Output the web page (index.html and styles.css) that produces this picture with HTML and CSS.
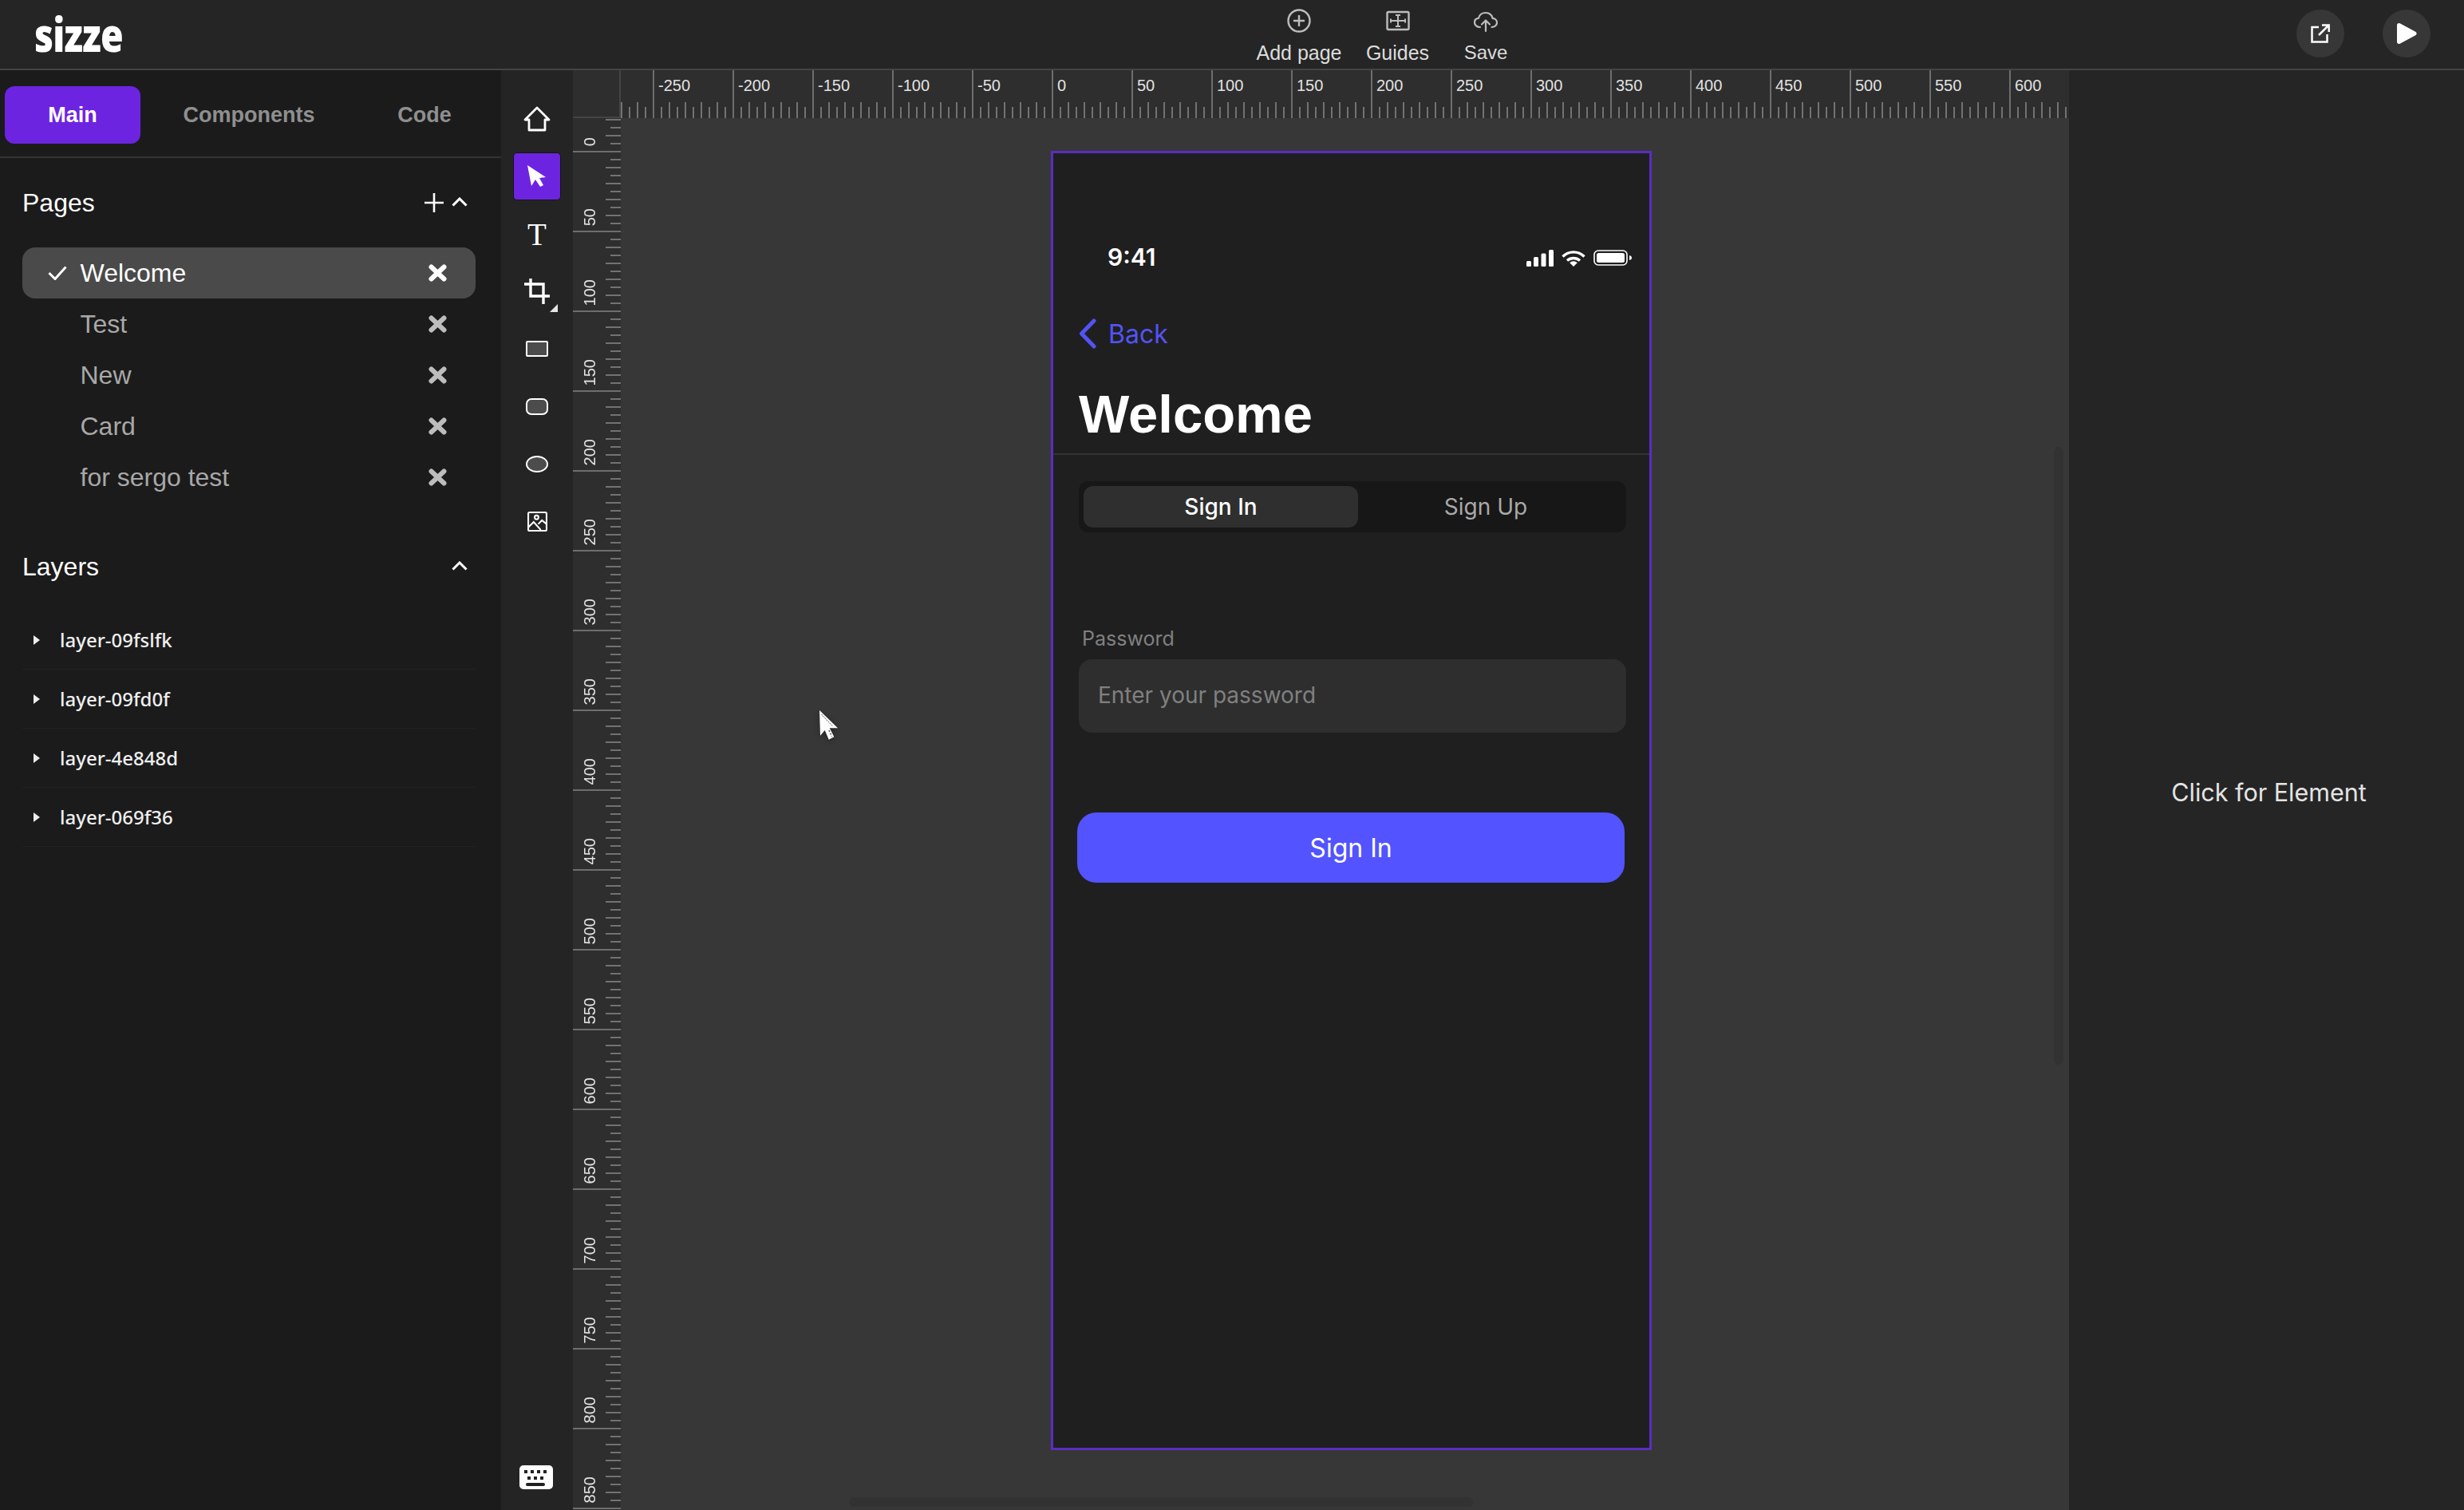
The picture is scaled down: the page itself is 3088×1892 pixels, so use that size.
FILE: index.html
```html
<!DOCTYPE html>
<html lang="en">
<head>
<meta charset="utf-8">
<title>Sizze</title>
<link rel="stylesheet" href="styles.css">
</head>
<body>
<div class="app">
  <header class="topbar">
    <div class="logo-wrap"><span class="logo">sizze</span></div>
    <nav class="actions">
      <button class="action action-add">
        <svg width="30" height="30" viewBox="0 0 30 30" fill="none" stroke="#bdbdbd" stroke-width="2.4"><circle cx="15" cy="15" r="13.5"/><path d="M15 8v14M8 15h14"/></svg>
        <span>Add page</span>
      </button>
      <button class="action action-guides">
        <svg width="30" height="30" viewBox="0 0 30 30" fill="none" stroke="#bdbdbd" stroke-width="2"><rect x="1.5" y="4" width="27" height="22" rx="1.5" stroke-width="2.4"/><path d="M15 8v14M6 15h18M12 8h6M12 22h6M6 12.5v5M24 12.5v5"/></svg>
        <span>Guides</span>
      </button>
      <button class="action action-save">
        <svg width="30" height="30" viewBox="0 0 30 30" fill="none" stroke="#bdbdbd" stroke-width="2.2" stroke-linecap="round" stroke-linejoin="round"><path d="M8 23C3.5 23 1 20 1 17c0-3 2-5 5-5.200C7 7.500 10.500 5 15 5c5 0 8 3.500 8.500 6.800 3 .2 5.500 2.400 5.500 5.400s-2.500 5.800-6.500 5.800"/><path d="M15 28V15M10 19.500l5-5 5 5"/></svg>
        <span>Save</span>
      </button>
    </nav>
    <div class="round-buttons">
      <button class="round-btn">
        <svg width="24" height="24" viewBox="0 0 24 24" fill="none" stroke="#fff" stroke-width="2.500"><path d="M10 4H1.500v18.500h19V13"/><path d="M10 14L22 2M14 1.500h8.700v8.500"/></svg>
      </button>
      <button class="round-btn">
        <svg width="26" height="28" viewBox="0 0 26 28"><path d="M3.500 3.500L23 14 3.500 24.500z" fill="#fff" stroke="#fff" stroke-width="5" stroke-linejoin="round"/></svg>
      </button>
    </div>
  </header>

  <div class="main">
    <aside class="panel">
      <div class="tabs">
        <div class="tab tab-main">Main</div>
        <div class="tab tab-components">Components</div>
        <div class="tab tab-code">Code</div>
      </div>

      <div class="section-head section-pages">
        <span>Pages</span>
        <div class="section-icons">
          <svg width="24" height="24" viewBox="0 0 24 24" stroke="#fff" stroke-width="2.600"><path d="M12 0v24M0 12h24"/></svg>
          <svg class="chev" width="20" height="12" viewBox="0 0 20 12" fill="none" stroke="#fff" stroke-width="3"><path d="M1.500 10.500L10 2l8.500 8.500"/></svg>
        </div>
      </div>

      <ul class="pages">
        <li class="page page-active">
          <svg class="check" width="24" height="18" viewBox="0 0 24 18" fill="none" stroke="#fff" stroke-width="3"><path d="M1.500 9l7.500 7.500L22.500 1.500"/></svg>
          <span class="page-name">Welcome</span>
          <svg class="x" width="23" height="22" viewBox="0 0 23 22" stroke="currentColor" stroke-width="6" stroke-linecap="round"><path d="M3.500 3.500l16 15M19.500 3.500l-16 15"/></svg>
        </li>
        <li class="page">
          <span class="page-name">Test</span>
          <svg class="x" width="23" height="22" viewBox="0 0 23 22" stroke="currentColor" stroke-width="6" stroke-linecap="round"><path d="M3.500 3.500l16 15M19.500 3.500l-16 15"/></svg>
        </li>
        <li class="page">
          <span class="page-name">New</span>
          <svg class="x" width="23" height="22" viewBox="0 0 23 22" stroke="currentColor" stroke-width="6" stroke-linecap="round"><path d="M3.500 3.500l16 15M19.500 3.500l-16 15"/></svg>
        </li>
        <li class="page">
          <span class="page-name">Card</span>
          <svg class="x" width="23" height="22" viewBox="0 0 23 22" stroke="currentColor" stroke-width="6" stroke-linecap="round"><path d="M3.500 3.500l16 15M19.500 3.500l-16 15"/></svg>
        </li>
        <li class="page">
          <span class="page-name">for sergo test</span>
          <svg class="x" width="23" height="22" viewBox="0 0 23 22" stroke="currentColor" stroke-width="6" stroke-linecap="round"><path d="M3.500 3.500l16 15M19.500 3.500l-16 15"/></svg>
        </li>
      </ul>

      <div class="section-head section-layers">
        <span>Layers</span>
        <div class="section-icons">
          <svg class="chev" width="20" height="12" viewBox="0 0 20 12" fill="none" stroke="#fff" stroke-width="3"><path d="M1.500 10.500L10 2l8.500 8.500"/></svg>
        </div>
      </div>

      <ul class="layers">
        <li class="layer"><i class="caret"></i><span>layer-09fslfk</span></li>
        <li class="layer"><i class="caret"></i><span>layer-09fd0f</span></li>
        <li class="layer"><i class="caret"></i><span>layer-4e848d</span></li>
        <li class="layer"><i class="caret"></i><span>layer-069f36</span></li>
      </ul>
    </aside>

    <div class="tools">
      <div class="tool">
        <svg width="34" height="32" viewBox="0 0 34 32" fill="none" stroke="#fff" stroke-width="2.800" stroke-linejoin="round"><path d="M17 2L2 17h5v13h20V17h5z"/></svg>
      </div>
      <div class="tool tool-active">
        <svg width="24" height="28" viewBox="0 0 24 28"><path d="M0 0l23 15-8 1 5 9-4 2-6-9-5 8z" fill="#fff"/></svg>
      </div>
      <div class="tool tool-text">T</div>
      <div class="tool">
        <svg class="crop" width="42" height="42" viewBox="0 0 42 42" fill="none" stroke="#fff" stroke-width="3.400"><path d="M0 7h24v25M8 0v22h24"/><path d="M32 42l10-10v10z" fill="#e6e6e6" stroke="none"/></svg>
      </div>
      <div class="tool">
        <svg width="28" height="20" viewBox="0 0 28 20"><rect x="1" y="1" width="26" height="18" rx="1" fill="#4c4c4c" stroke="#fff" stroke-width="2"/></svg>
      </div>
      <div class="tool">
        <svg width="28" height="21" viewBox="0 0 28 21"><rect x="1" y="1" width="26" height="19" rx="6" fill="#4c4c4c" stroke="#fff" stroke-width="2"/></svg>
      </div>
      <div class="tool">
        <svg width="28" height="21" viewBox="0 0 28 21"><ellipse cx="14" cy="10.500" rx="13" ry="9.500" fill="#4c4c4c" stroke="#fff" stroke-width="2"/></svg>
      </div>
      <div class="tool">
        <svg width="25" height="25" viewBox="0 0 24 24" fill="none" stroke="#fff" stroke-width="2"><rect x="1" y="1" width="22" height="22" rx="1.500"/><circle cx="11" cy="7" r="2.300"/><path d="M1 19l6.500-6.500L16 22M13 15l4.500-4.500L23 15"/></svg>
      </div>
      <div class="keyboard">
        <svg width="42" height="30" viewBox="0 0 42 30"><rect width="42" height="30" rx="5" fill="#fff"/><g fill="#222"><rect x="6" y="6" width="4" height="4"/><rect x="14" y="6" width="4" height="4"/><rect x="22" y="6" width="4" height="4"/><rect x="30" y="6" width="4" height="4"/><rect x="10" y="14" width="4" height="4"/><rect x="18" y="14" width="4" height="4"/><rect x="26" y="14" width="4" height="4"/><rect x="8" y="22" width="24" height="4" rx="2"/></g></svg>
      </div>
    </div>

    <div class="workspace">
      <div class="corner"></div>
      <div class="ruler-h">
        <div class="h-start"></div>
        <div class="h-cell">-250</div><div class="h-cell">-200</div><div class="h-cell">-150</div><div class="h-cell">-100</div><div class="h-cell">-50</div><div class="h-cell">0</div><div class="h-cell">50</div><div class="h-cell">100</div><div class="h-cell">150</div><div class="h-cell">200</div><div class="h-cell">250</div><div class="h-cell">300</div><div class="h-cell">350</div><div class="h-cell">400</div><div class="h-cell">450</div><div class="h-cell">500</div><div class="h-cell">550</div><div class="h-cell">600</div>
      </div>
      <div class="right-panel">Click for Element</div>
      <div class="ruler-v">
        <div class="v-cell v-first"><span>0</span></div>
        <div class="v-cell"><span>50</span></div><div class="v-cell"><span>100</span></div><div class="v-cell"><span>150</span></div><div class="v-cell"><span>200</span></div><div class="v-cell"><span>250</span></div><div class="v-cell"><span>300</span></div><div class="v-cell"><span>350</span></div><div class="v-cell"><span>400</span></div><div class="v-cell"><span>450</span></div><div class="v-cell"><span>500</span></div><div class="v-cell"><span>550</span></div><div class="v-cell"><span>600</span></div><div class="v-cell"><span>650</span></div><div class="v-cell"><span>700</span></div><div class="v-cell"><span>750</span></div><div class="v-cell"><span>800</span></div><div class="v-cell"><span>850</span></div>
      </div>

      <div class="canvas">
        <section class="phone">
          <div class="status">
            <span class="time">9:41</span>
            <div class="status-icons">
              <svg width="34" height="21" viewBox="0 0 34 21" fill="#fff"><rect x="0" y="14" width="6" height="7" rx="1.500"/><rect x="9" y="9" width="6" height="12" rx="1.500"/><rect x="18.500" y="4.500" width="6" height="16.500" rx="1.500"/><rect x="28" y="0" width="6" height="21" rx="1.500"/></svg>
              <svg width="30" height="21" viewBox="0 0 30 21" fill="none" stroke="#fff" stroke-width="3.400"><path d="M1.500 8.500a19 19 0 0 1 27 0M7 13.500a12 12 0 0 1 16 0"/><path d="M15 21l-4.800-4.800a7 7 0 0 1 9.600 0z" fill="#fff" stroke="none"/></svg>
              <svg width="48" height="20" viewBox="0 0 48 20"><rect x="1" y="1" width="41" height="18" rx="5" fill="none" stroke="#fff" stroke-width="1.600"/><rect x="4" y="4" width="35" height="12" rx="2.500" fill="#fff"/><path d="M45 7c2 .5 3 1.500 3 3s-1 2.500-3 3z" fill="#fff"/></svg>
            </div>
          </div>
          <div class="back">
            <svg width="22" height="38" viewBox="0 0 22 38" fill="none" stroke="#5353f5" stroke-width="5" stroke-linecap="round" stroke-linejoin="round"><path d="M19 3L3.500 19 19 35"/></svg>
            <span>Back</span>
          </div>
          <h1 class="title">Welcome</h1>
          <div class="phone-body">
            <div class="segment">
              <div class="seg seg-on">Sign In</div>
              <div class="seg seg-off">Sign Up</div>
            </div>
            <label class="field-label">Password</label>
            <div class="input">Enter your password</div>
            <div class="cta">Sign In</div>
          </div>
        </section>
        <svg class="cursor" width="24" height="38" viewBox="0 0 24 38"><path d="M0 0l23 22.300H12.700l5.600 11-6.600 3.400L6.700 25 1 31.700z" fill="#fff"/><path d="M2.500 5l14 15" stroke="#555" stroke-width="1" stroke-dasharray="2 1"/><path d="M12 25l3.500 8" stroke="#555" stroke-width="1.500" stroke-dasharray="2 2"/></svg>
        <div class="scroll-v"></div>
        <div class="scroll-h"></div>
      </div>
    </div>
  </div>
</div>
</body>
</html>
```

FILE: styles.css
```css
* { box-sizing: border-box; }
html, body { margin: 0; height: 100%; background: #252525; overflow: hidden; }
body { font-family: "Liberation Sans", Arial, sans-serif; color: #fff; }
ul { list-style: none; margin: 0; padding: 0; }
button { background: none; border: 0; padding: 0; color: inherit; font: inherit; }

.app { height: 1892px; display: flex; flex-direction: column; }

/* top bar */
.topbar { height: 88px; flex: none; display: flex; align-items: stretch; background: #252525; border-bottom: 2px solid #444; }
.logo-wrap { width: 1574px; flex: none; padding-left: 43px; display: flex; align-items: center; }
.logo { display: block; font-family: "Open Sans", sans-serif; font-weight: 800; font-size: 58px; line-height: 66px; letter-spacing: -1px; color: #fff; transform: scaleX(.8); transform-origin: left center; }
.actions { display: flex; }
.action { display: flex; flex-direction: column; align-items: center; justify-content: flex-start; padding-top: 11px; font-size: 25px; color: #dcdcdc; }
.action svg { display: block; }
.action span { display: block; line-height: 28px; margin-top: 11px; white-space: nowrap; }
.action-add { width: 108px; margin-right: 30px; }
.action-guides { width: 79px; margin-right: 45px; }
.action-save { width: 52px; font-size: 24px; }
.round-buttons { margin-left: auto; padding-right: 42px; display: flex; gap: 48px; align-items: center; padding-bottom: 2px; }
.round-btn { width: 60px; height: 60px; border-radius: 50%; background: #373737; display: flex; align-items: center; justify-content: center; }

.main { flex: 1; display: flex; min-height: 0; }

/* left panel */
.panel { width: 628px; flex: none; background: #1b1b1b; }
.tabs { height: 110px; display: flex; align-items: flex-start; padding: 20px 0 0 6px; border-bottom: 2px solid #333; }
.tab { height: 72px; display: flex; align-items: center; justify-content: center; font-size: 27px; font-weight: 700; color: #8f8f8f; border-radius: 12px; }
.tab-main { width: 170px; background: #6d24e0; color: #fff; }
.tab-components { width: 272px; }
.tab-code { width: 168px; }

.section-head { height: 64px; padding: 0 42px 0 28px; display: flex; align-items: center; justify-content: space-between; font-size: 32px; color: #fff; }
.section-pages { margin-top: 24px; }
.section-layers { margin-top: 48px; }
.section-icons { display: flex; align-items: center; gap: 10px; }
.section-icons svg { display: block; }
.chev { margin-top: -2px; }

.pages { margin: 24px 32px 0 28px; }
.page { height: 64px; display: flex; align-items: center; padding: 0 36px 0 72.500px; position: relative; font-size: 32px; color: #a8a8a8; border-radius: 16px; }
.page-name { flex: 1; }
.page .x { color: #bdbdbd; }
.page-active { background: #4a4a4a; color: #fff; }
.page-active .x { color: #fff; }
.check { position: absolute; left: 32px; top: 23px; }

.layers { margin: 23px 32px 0 28px; }
.layer { height: 74px; display: flex; align-items: center; border-bottom: 1px solid #222; font-family: "Noto Sans", sans-serif; font-size: 24px; font-weight: 500; color: #efefef; padding-left: 14px; }
.caret { display: block; width: 0; height: 0; border-left: 8px solid #eee; border-top: 6px solid transparent; border-bottom: 6px solid transparent; margin-right: 25px; }

/* tool strip */
.tools { width: 90px; flex: none; background: #242424; padding-top: 25px; padding-bottom: 26px; display: flex; flex-direction: column; align-items: center; }
.tool { height: 72px; width: 60px; flex: none; display: flex; align-items: center; justify-content: center; }
.tool-active { height: 60px; margin: 6px 0; background: #6d24e0; border: 1px solid #151515; border-radius: 5px; }
.tool-text { font-family: "Liberation Serif", serif; font-size: 39px; color: #fff; }
.crop { margin: 10px 0 0 10px; }
.keyboard { margin-top: auto; padding-right: 2px; }
.keyboard svg { display: block; }

/* rulers and canvas */
.workspace { flex: 1; display: grid; grid-template-columns: 60px 1815px 495px; grid-template-rows: 60px 1fr; min-width: 0; }
.corner { background: #2e2e2e; border-right: 2px solid #444; border-bottom: 2px solid #444; }
.ruler-h { display: flex; overflow: hidden; background-color: #2e2e2e; background-image: linear-gradient(90deg, #727272 2px, transparent 2px), linear-gradient(90deg, #727272 2px, transparent 2px); background-size: 20px 20px, 20px 14px; background-position: 0 100%, 10px 100%; background-repeat: repeat-x; }
.h-start { width: 40px; flex: none; }
.h-cell { width: 100px; flex: none; border-left: 2px solid #6e6e6e; padding: 8px 0 0 5px; font-size: 20px; line-height: 22px; color: #e2e2e2; }
.ruler-v { overflow: hidden; background-color: #2e2e2e; background-image: linear-gradient(#727272 2px, transparent 2px), linear-gradient(#727272 2px, transparent 2px); background-size: 19px 20px, 13px 20px; background-position: 100% 1px, 100% 11px; background-repeat: repeat-y; }
.v-cell { height: 100px; border-bottom: 2px solid #6e6e6e; padding: 0 0 6px 10px; display: flex; align-items: flex-end; }
.v-first { height: 43px; }
.v-cell span { writing-mode: vertical-rl; transform: rotate(180deg); font-size: 20px; line-height: 22px; color: #e2e2e2; }

.canvas { position: relative; background: #373737; padding: 41px 0 0 539px; overflow: hidden; }
.right-panel { grid-column: 3; grid-row: 1 / span 2; background: #252525; display: flex; align-items: center; justify-content: center; font-family: "Inter", sans-serif; font-size: 30.500px; color: #e4e4e4; padding: 5px 0 0 6px; }

/* phone */
.phone { width: 753px; height: 1628px; background: #1f1f1f; border: 3px solid #5a2dc0; }
.status { margin-top: 99px; height: 62px; padding: 0 22px 0 68px; display: flex; align-items: center; justify-content: space-between; }
.time { font-family: "Inter", sans-serif; font-weight: 600; font-size: 30px; color: #fff; }
.status-icons { display: flex; align-items: center; gap: 10px; padding-top: 2px; }
.status-icons svg { display: block; }
.back { margin-top: 46px; height: 38px; padding-left: 32px; display: flex; align-items: center; gap: 15px; font-family: "Inter", sans-serif; font-size: 32px; color: #5353f5; }
.back svg { display: block; }
.title { margin: 42px 0 0; padding: 0 0 10px 32px; height: 91px; font-size: 67px; line-height: 80px; font-weight: 700; border-bottom: 2px solid #333; color: #fff; }
.phone-body { padding: 33px 29px 0 32px; font-family: "Inter", sans-serif; }
.segment { height: 64px; background: #171717; border-radius: 12px; padding: 6px; display: flex; }
.seg { display: flex; align-items: center; justify-content: center; font-size: 28px; border-radius: 12px; }
.seg-on { width: 344px; background: #2f2f2f; color: #fff; font-weight: 500; }
.seg-off { flex: 1; padding-right: 10px; color: #a9a9a9; }
.field-label { display: block; margin: 117px 0 10px 4px; font-size: 25px; line-height: 32px; color: #808080; }
.input { height: 92px; background: #2e2e2e; border-radius: 16px; padding: 0 0 2px 24px; display: flex; align-items: center; font-size: 28px; color: #808080; }
.cta { margin: 100px 2px 0 -2px; height: 88px; background: #5353ff; border-radius: 24px; display: flex; align-items: center; justify-content: center; font-size: 32px; font-weight: 400; color: #fff; }

/* overlays */
.cursor { position: absolute; left: 249px; top: 742px; filter: drop-shadow(0 2px 3px rgba(0,0,0,.35)); }
.scroll-v { position: absolute; left: 1796px; top: 412px; width: 12px; height: 774px; border-radius: 6px; background: #323232; }
.scroll-h { position: absolute; left: 286px; top: 1728px; width: 782px; height: 12px; border-radius: 6px; background: #323232; }
```
